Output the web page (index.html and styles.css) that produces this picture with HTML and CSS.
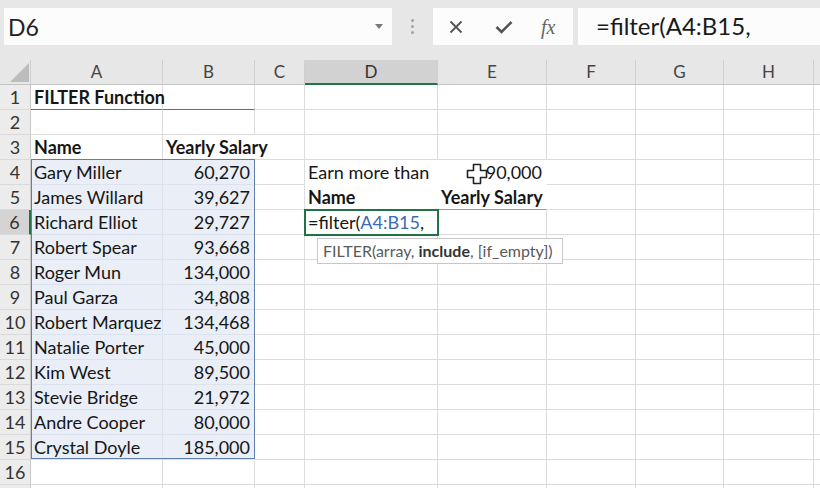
FILE: index.html
```html
<!DOCTYPE html>
<html>
<head>
<meta charset="utf-8">
<link rel="stylesheet" href="styles.css">
</head>
<body>
<div class="app">
  <div class="toolbar">
    <div class="namebox">
      <span class="nb-text">D6</span>
      <svg class="nb-arrow" width="8" height="5" viewBox="0 0 8 5"><polygon points="0,0 8,0 4,5" fill="#777"/></svg>
    </div>
    <div class="dots"><span></span><span></span><span></span></div>
    <div class="btns">
      <svg class="ic ic-x" width="14" height="14" viewBox="0 0 14 14"><path d="M1.5 1.5 L12.5 12.5 M12.5 1.5 L1.5 12.5" stroke="#555" stroke-width="1.8" fill="none"/></svg>
      <svg class="ic ic-ok" width="18" height="14" viewBox="0 0 18 14"><path d="M1.5 7 L6.5 12 L16.5 2" stroke="#555" stroke-width="2.6" fill="none"/></svg>
      <span class="ic-fx">fx</span>
    </div>
    <div class="formula">=filter(A4:B15,</div>
  </div>

  <div class="sheet">
    <div class="corner"><svg width="31" height="25" viewBox="0 0 31 25"><polygon points="29,3 29,22 10,22" fill="#bcbcbc"/></svg></div>
    <div class="ch">A</div><div class="ch">B</div><div class="ch">C</div><div class="ch sel">D</div><div class="ch">E</div><div class="ch">F</div><div class="ch">G</div><div class="ch">H</div><div class="ch"></div>

    <div class="rh">1</div><div class="c b ul">FILTER Function</div><div class="c ul"></div><div class="c"></div><div class="c"></div><div class="c"></div><div class="c"></div><div class="c"></div><div class="c"></div><div class="c"></div>
    <div class="rh">2</div><div class="c"></div><div class="c"></div><div class="c"></div><div class="c"></div><div class="c"></div><div class="c"></div><div class="c"></div><div class="c"></div><div class="c"></div>
    <div class="rh">3</div><div class="c b">Name</div><div class="c b nor">Yearly Salary</div><div class="c"></div><div class="c"></div><div class="c"></div><div class="c"></div><div class="c"></div><div class="c"></div><div class="c"></div>
    <div class="rh">4</div><div class="c hl">Gary Miller</div><div class="c hl num">60,270</div><div class="c"></div><div class="c wf">Earn more than</div><div class="c wf num">90,000</div><div class="c"></div><div class="c"></div><div class="c"></div><div class="c"></div>
    <div class="rh">5</div><div class="c hl">James Willard</div><div class="c hl num">39,627</div><div class="c"></div><div class="c wf b bb">Name</div><div class="c wf b bb num">Yearly Salary</div><div class="c"></div><div class="c"></div><div class="c"></div><div class="c"></div>
    <div class="rh sel">6</div><div class="c hl">Richard Elliot</div><div class="c hl num">29,727</div><div class="c"></div><div class="c active">=filter(<span class="ref">A4:B15</span>,</div><div class="c"></div><div class="c"></div><div class="c"></div><div class="c"></div><div class="c"></div>
    <div class="rh">7</div><div class="c hl">Robert Spear</div><div class="c hl num">93,668</div><div class="c"></div><div class="c"></div><div class="c"></div><div class="c"></div><div class="c"></div><div class="c"></div><div class="c"></div>
    <div class="rh">8</div><div class="c hl">Roger Mun</div><div class="c hl num">134,000</div><div class="c"></div><div class="c"></div><div class="c"></div><div class="c"></div><div class="c"></div><div class="c"></div><div class="c"></div>
    <div class="rh">9</div><div class="c hl">Paul Garza</div><div class="c hl num">34,808</div><div class="c"></div><div class="c"></div><div class="c"></div><div class="c"></div><div class="c"></div><div class="c"></div><div class="c"></div>
    <div class="rh">10</div><div class="c hl">Robert Marquez</div><div class="c hl num">134,468</div><div class="c"></div><div class="c"></div><div class="c"></div><div class="c"></div><div class="c"></div><div class="c"></div><div class="c"></div>
    <div class="rh">11</div><div class="c hl">Natalie Porter</div><div class="c hl num">45,000</div><div class="c"></div><div class="c"></div><div class="c"></div><div class="c"></div><div class="c"></div><div class="c"></div><div class="c"></div>
    <div class="rh">12</div><div class="c hl">Kim West</div><div class="c hl num">89,500</div><div class="c"></div><div class="c"></div><div class="c"></div><div class="c"></div><div class="c"></div><div class="c"></div><div class="c"></div>
    <div class="rh">13</div><div class="c hl">Stevie Bridge</div><div class="c hl num">21,972</div><div class="c"></div><div class="c"></div><div class="c"></div><div class="c"></div><div class="c"></div><div class="c"></div><div class="c"></div>
    <div class="rh">14</div><div class="c hl">Andre Cooper</div><div class="c hl num">80,000</div><div class="c"></div><div class="c"></div><div class="c"></div><div class="c"></div><div class="c"></div><div class="c"></div><div class="c"></div>
    <div class="rh">15</div><div class="c hl">Crystal Doyle</div><div class="c hl num">185,000</div><div class="c"></div><div class="c"></div><div class="c"></div><div class="c"></div><div class="c"></div><div class="c"></div><div class="c"></div>
    <div class="rh">16</div><div class="c"></div><div class="c"></div><div class="c"></div><div class="c"></div><div class="c"></div><div class="c"></div><div class="c"></div><div class="c"></div><div class="c"></div>
    <div class="rh"></div><div class="c"></div><div class="c"></div><div class="c"></div><div class="c"></div><div class="c"></div><div class="c"></div><div class="c"></div><div class="c"></div><div class="c"></div>

    <div class="range"></div>

    <div class="tooltip">FILTER(array, <b>include</b>, [if_empty])</div>
    <svg class="cursor" width="22" height="22" viewBox="0 0 22 22"><path d="M7.5 1.5 H14.5 V7.5 H20.5 V14.5 H14.5 V20.5 H7.5 V14.5 H1.5 V7.5 H7.5 Z" fill="#fff" stroke="#222" stroke-width="1.6" stroke-linejoin="round"/></svg>
  </div>
</div>
</body>
</html>
```
FILE: styles.css
```css
html, body {
  margin: 0;
  padding: 0;
  background: #ffffff;
}
body {
  width: 820px;
  height: 488px;
  overflow: hidden;
  font-family: Lato, "Open Sans", sans-serif;
  color: #1e1e1e;
}
.app {
  width: 820px;
  height: 488px;
  overflow: hidden;
}

/* toolbar */
.toolbar {
  height: 60px;
  background: #e7e7e7;
  display: flex;
  align-items: flex-start;
  padding: 8px 0 0 4px;
  box-sizing: border-box;
}
.namebox {
  width: 388px;
  height: 37px;
  background: #fcfcfc;
  display: flex;
  align-items: center;
  justify-content: space-between;
  padding: 0 9px 0 4px;
  box-sizing: border-box;
}
.nb-text {
  font-size: 23px;
  color: #222;
}
.nb-arrow {
  display: block;
}
.dots {
  width: 41px;
  height: 37px;
  display: flex;
  flex-direction: column;
  align-items: center;
  justify-content: center;
  gap: 3px;
}
.dots span {
  width: 3px;
  height: 3px;
  border-radius: 50%;
  background: #a3a3a3;
}
.btns {
  width: 140px;
  height: 37px;
  background: #fcfcfc;
  display: flex;
  align-items: center;
  box-sizing: border-box;
  padding-left: 16px;
}
.ic { display: block; }
.ic-x { margin-right: 32px; }
.ic-ok { margin-right: 28px; }
.ic-fx {
  font-family: "Liberation Serif", "DejaVu Serif", serif;
  font-style: italic;
  font-size: 20px;
  color: #666;
  line-height: 1;
}
.formula {
  flex: 1;
  height: 37px;
  margin-left: 5px;
  background: #fcfcfc;
  font-size: 24px;
  line-height: 36px;
  padding-left: 18px;
  color: #1a1a1a;
}

/* sheet */
.sheet {
  position: relative;
  display: grid;
  grid-template-columns: 31px 132px 92px 50px 133px 109px 89px 88px 90px 1fr;
  grid-auto-rows: 25px;
}
.corner {
  background: #e7e7e7;
  border-right: 1px solid #cfcfcf;
  border-bottom: 1px solid #c4c4c4;
  box-sizing: border-box;
}
.corner svg { display: block; }
.ch {
  background: #e7e7e7;
  border-right: 1px solid #d0d0d0;
  border-bottom: 1px solid #c4c4c4;
  box-sizing: border-box;
  text-align: center;
  font-size: 17px;
  line-height: 24px;
  color: #444;
}
.ch.sel {
  background: #d2d2d2;
  border-bottom: 2px solid #217346;
  color: #333;
}
.rh {
  background: #ececec;
  border-right: 1px solid #c9c9c9;
  border-bottom: 1px solid #dadada;
  box-sizing: border-box;
  text-align: center;
  font-size: 18px;
  line-height: 24px;
  color: #333;
}
.rh.sel {
  background: #d4d4d4;
  border-right: 2px solid #217346;
}
.c {
  border-right: 1px solid #dcdcdc;
  border-bottom: 1px solid #dcdcdc;
  box-sizing: border-box;
  font-size: 18px;
  line-height: 24px;
  padding: 0 4px 0 3px;
  white-space: nowrap;
  color: #161616;
}
.b { font-weight: 700; }
.num { text-align: right; }
.nor { border-right-color: transparent; }
.ul { border-bottom: 1px solid #6e6e6e; }
.hl {
  background: #e9eef7;
  border-right-color: #dde3ee;
  border-bottom-color: #dde3ee;
}
.wf {
  background: #ffffff;
  border-right-color: #ffffff;
  border-bottom-color: #ffffff;
}
.wf.bb { border-bottom: 1px solid #9a9a9a; }
.active {
  outline: 2px solid #217346;
  outline-offset: -1px;
  position: relative;
  z-index: 2;
}
.ref { color: #3b6bb0; }

.range {
  position: absolute;
  grid-column: 2 / 4;
  grid-row: 5 / 17;
  top: -1px;
  left: 0;
  right: 0;
  bottom: 1px;
  border: 1px solid #5f7fae;
  pointer-events: none;
  z-index: 1;
}

.tooltip {
  position: absolute;
  left: 317px;
  top: 178px;
  height: 26px;
  padding: 0 9px 0 5px;
  background: #ffffff;
  border: 1px solid #c6c6c6;
  box-sizing: border-box;
  font-size: 16px;
  line-height: 24px;
  color: #5a5a5a;
  white-space: nowrap;
  z-index: 3;
}
.tooltip b { color: #333; }
.cursor {
  position: absolute;
  left: 466px;
  top: 103px;
  z-index: 3;
}
```
